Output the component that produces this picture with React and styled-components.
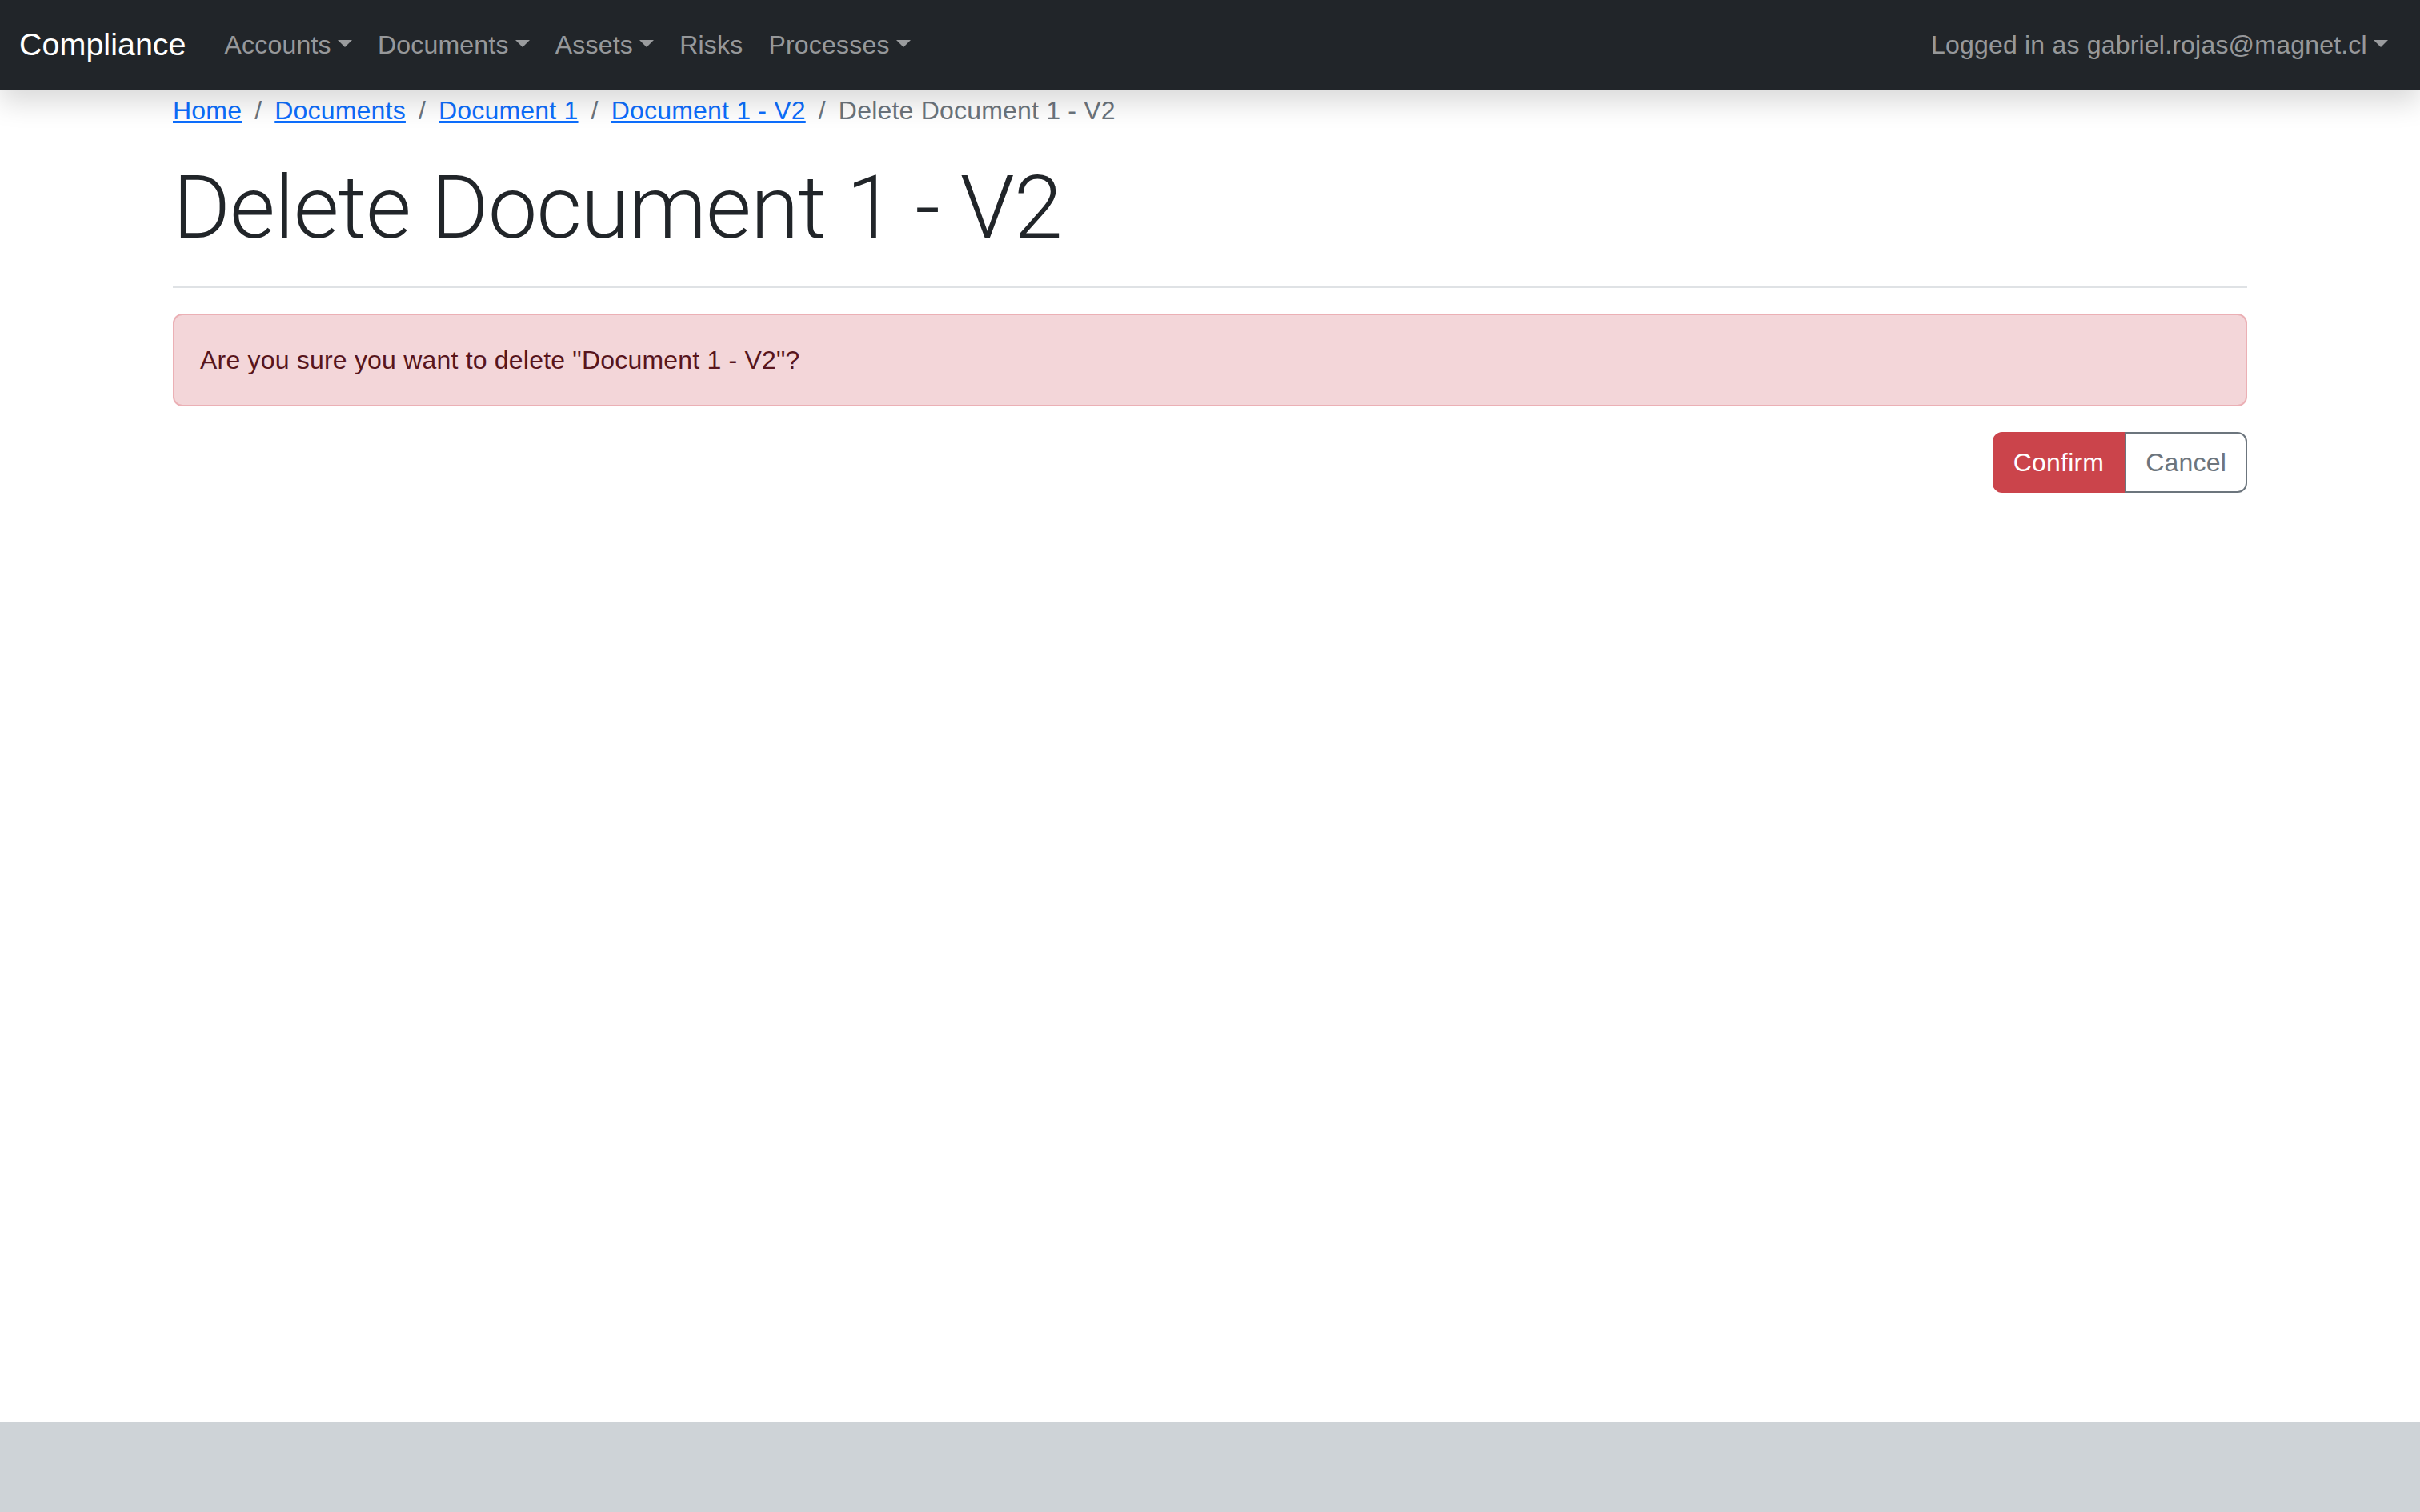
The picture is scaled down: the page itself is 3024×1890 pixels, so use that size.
import React from "react";
import styled, { createGlobalStyle } from "styled-components";

const GlobalStyle = createGlobalStyle`
    html, body {
        margin: 0;
        padding: 0;
        background: #ffffff;
    }
    body {
        font-family: "Liberation Sans", Arial, sans-serif;
        font-size: 32px;
        line-height: 1.5;
        letter-spacing: 0.2px;
        color: #212529;
    }
    * {
        box-sizing: border-box;
    }
`;

const Page = styled.div`
    min-height: 100vh;
    display: flex;
    flex-direction: column;
`;

const Navbar = styled.nav`
    background-color: #212529;
    padding: 16px 24px;
    display: flex;
    align-items: center;
    box-shadow: 0 16px 32px rgba(0, 0, 0, 0.15);
    position: relative;
    z-index: 2;
`;

const Brand = styled.a`
    color: #ffffff;
    font-size: 39.5px;
    line-height: 1.5;
    letter-spacing: 0;
    padding: 10px 0;
    margin-right: 32px;
    text-decoration: none;
    white-space: nowrap;
`;

const NavList = styled.ul`
    display: flex;
    list-style: none;
    margin: 0;
    padding: 0;
    margin-left: ${(p) => (p.$right ? "auto" : "0")};
`;

const NavLink = styled.a`
    display: block;
    padding: 16px;
    color: rgba(255, 255, 255, 0.55);
    text-decoration: none;
    white-space: nowrap;
    &::after {
        content: ${(p) => (p.$dropdown ? '""' : "none")};
        display: inline-block;
        margin-left: 0.255em;
        vertical-align: 0.255em;
        border-top: 0.3em solid;
        border-right: 0.3em solid transparent;
        border-left: 0.3em solid transparent;
        border-bottom: 0;
    }
`;

const Main = styled.main`
    flex: 1;
`;

const Container = styled.div`
    width: 2640px;
    max-width: 100%;
    margin: 0 auto;
    padding: 0 24px;
`;

const Breadcrumb = styled.ol`
    display: flex;
    flex-wrap: wrap;
    list-style: none;
    margin: 2px 0 32px;
    padding: 0;
`;

const Crumb = styled.li`
    color: #6c757d;
    & + & {
        padding-left: 16px;
    }
    & + &::before {
        content: "/";
        float: left;
        padding-right: 16px;
        color: #6c757d;
    }
    a {
        color: #0d6efd;
        text-decoration: underline;
    }
`;

const Title = styled.h1`
    font-family: Roboto, "Liberation Sans", sans-serif;
    font-weight: 300;
    font-size: 110px;
    line-height: 1.2;
    letter-spacing: -1px;
    margin: 0 0 16px;
`;

const Rule = styled.hr`
    margin: 32px 0;
    border: 0;
    border-top: 2px solid #dfe2e5;
`;

const Alert = styled.div`
    padding: 32px;
    margin-bottom: 32px;
    color: #58151c;
    background-color: #f3d6d9;
    border: 2px solid #ebb0b5;
    border-radius: 12px;
`;

const Actions = styled.div`
    display: flex;
    justify-content: flex-end;
`;

const ButtonGroup = styled.div`
    display: inline-flex;
`;

const Button = styled.button`
    font-family: inherit;
    font-size: 32px;
    line-height: 1.5;
    letter-spacing: 0.2px;
    padding: 12px 24px;
    border: 2px solid ${(p) => (p.$danger ? "#cb444b" : "#6c757d")};
    background: ${(p) => (p.$danger ? "#cb444b" : "#ffffff")};
    color: ${(p) => (p.$danger ? "#ffffff" : "#6c757d")};
    border-radius: ${(p) => (p.$danger ? "12px 0 0 12px" : "0 12px 12px 0")};
    cursor: pointer;
`;

const Footer = styled.footer`
    height: 112px;
    background-color: #ced3d7;
`;

const App = () => {
    return (
        <Page>
            <GlobalStyle />
            <Navbar>
                <Brand href="#">Compliance</Brand>
                <NavList>
                    <li><NavLink href="#" $dropdown>Accounts</NavLink></li>
                    <li><NavLink href="#" $dropdown>Documents</NavLink></li>
                    <li><NavLink href="#" $dropdown>Assets</NavLink></li>
                    <li><NavLink href="#">Risks</NavLink></li>
                    <li><NavLink href="#" $dropdown>Processes</NavLink></li>
                </NavList>
                <NavList $right>
                    <li><NavLink href="#" $dropdown>Logged in as gabriel.rojas@magnet.cl</NavLink></li>
                </NavList>
            </Navbar>
            <Main>
                <Container>
                    <Breadcrumb>
                        <Crumb><a href="#">Home</a></Crumb>
                        <Crumb><a href="#">Documents</a></Crumb>
                        <Crumb><a href="#">Document 1</a></Crumb>
                        <Crumb><a href="#">Document 1 - V2</a></Crumb>
                        <Crumb>Delete Document 1 - V2</Crumb>
                    </Breadcrumb>
                    <Title>Delete Document 1 - V2</Title>
                    <Rule />
                    <Alert>Are you sure you want to delete "Document 1 - V2"?</Alert>
                    <Actions>
                        <ButtonGroup>
                            <Button $danger>Confirm</Button>
                            <Button>Cancel</Button>
                        </ButtonGroup>
                    </Actions>
                </Container>
            </Main>
            <Footer />
        </Page>
    );
};

export default App;
